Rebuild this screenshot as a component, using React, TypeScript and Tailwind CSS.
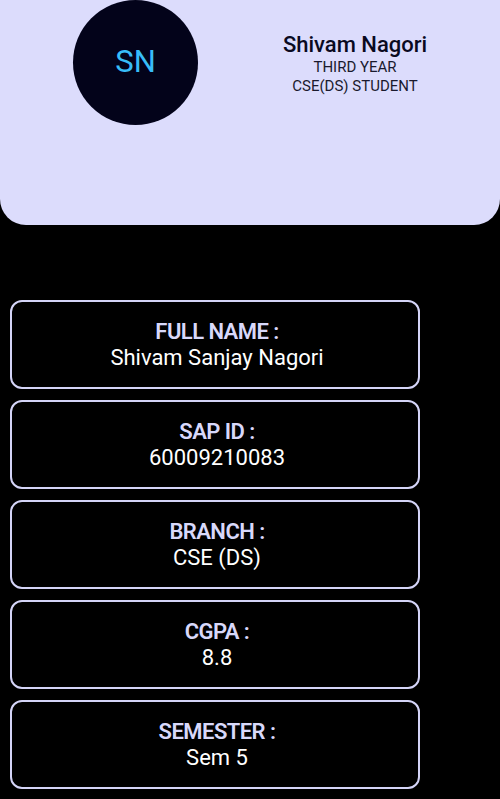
const details = [
  { label: 'FULL NAME :', value: 'Shivam Sanjay Nagori' },
  { label: 'SAP ID :', value: '60009210083' },
  { label: 'BRANCH :', value: 'CSE (DS)' },
  { label: 'CGPA :', value: '8.8' },
  { label: 'SEMESTER :', value: 'Sem 5' },
];

export default function App() {
  return (
    <div className="min-h-[799px] w-[500px] bg-black font-['Roboto',sans-serif]">
      {/* Profile header */}
      <div className="flex h-[225px] items-start rounded-b-[26px] bg-[#dcdcfc]">
        <div className="ml-[73px] flex h-[125px] w-[125px] items-center justify-center rounded-full bg-[#03031a]">
          <span className="text-[31px] text-[#38bdf8]">SN</span>
        </div>
        <div className="ml-[55px] w-[204px] pt-[32px] text-center">
          <div className="text-[22px] leading-[26px] font-medium text-[#0a0a1f]">Shivam Nagori</div>
          <div className="text-[15px] leading-[19px] text-[#1a1a2e]">THIRD YEAR</div>
          <div className="text-[15px] leading-[19px] text-[#1a1a2e]">CSE(DS) STUDENT</div>
        </div>
      </div>

      {/* Detail cards */}
      <div className="mt-[75px] flex flex-col gap-[11px] pl-[10px]">
        {details.map((d) => (
          <div
            key={d.label}
            className="flex h-[89px] w-[410px] flex-col items-center justify-center rounded-[12px] border-2 border-[#d4d4f7] pl-[4px]"
          >
            <div className="text-[22px] leading-[26px] font-semibold tracking-tight text-[#d8d8fa]">{d.label}</div>
            <div className="text-[22px] leading-[26px] text-white">{d.value}</div>
          </div>
        ))}
      </div>
    </div>
  );
}
